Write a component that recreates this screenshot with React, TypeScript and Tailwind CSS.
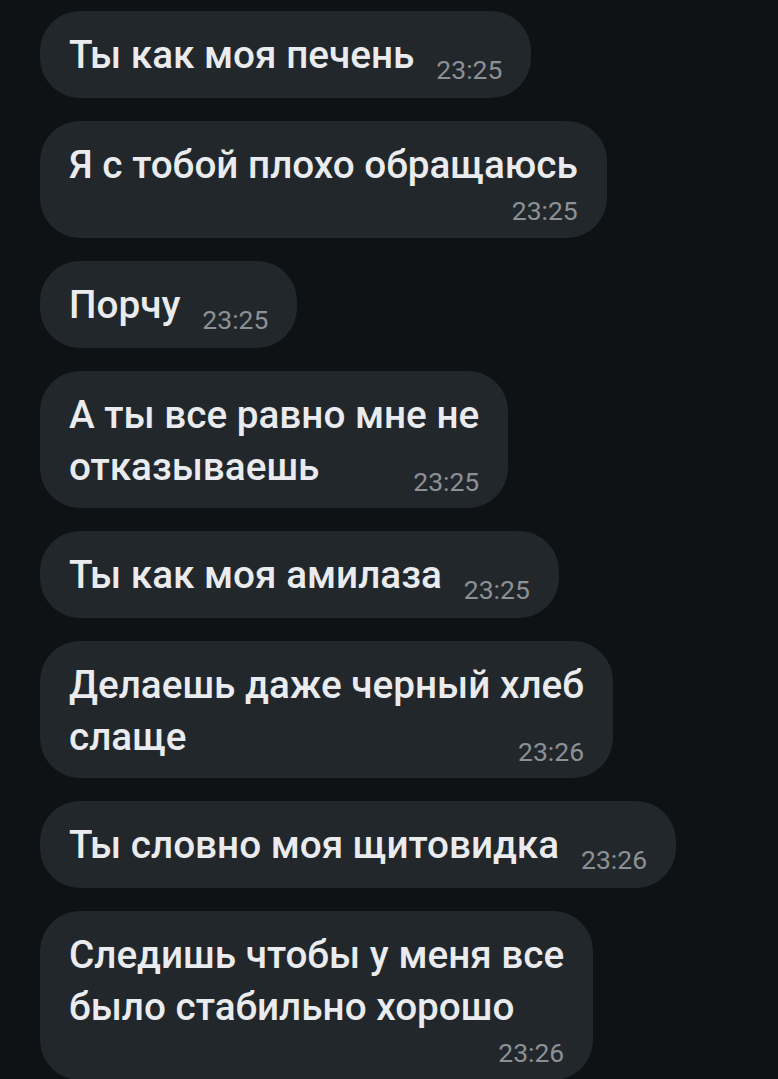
import React from "react";

type Message = {
  lines: string[];
  time: string;
  below?: boolean;
};

const messages: Message[] = [
  { lines: ["Ты как моя печень"], time: "23:25" },
  { lines: ["Я с тобой плохо обращаюсь"], time: "23:25", below: true },
  { lines: ["Порчу"], time: "23:25" },
  { lines: ["А ты все равно мне не", "отказываешь"], time: "23:25" },
  { lines: ["Ты как моя амилаза"], time: "23:25" },
  { lines: ["Делаешь даже черный хлеб", "слаще"], time: "23:26" },
  { lines: ["Ты словно моя щитовидка"], time: "23:26" },
  { lines: ["Следишь чтобы у меня все", "было стабильно хорошо"], time: "23:26", below: true },
];

function Bubble({ msg }: { msg: Message }) {
  const last = msg.lines.length - 1;

  if (msg.below) {
    return (
      <div className="self-start rounded-[40px] bg-[#22272b] pl-[29px] pr-[29px] pt-[18px] pb-[14px]">
        {msg.lines.map((line, i) => (
          <div key={i} className="whitespace-nowrap text-[38.7px] leading-[52px] font-medium text-[#e9ebee]">
            {line}
          </div>
        ))}
        <div className="mt-[7px] text-right text-[26.5px] leading-[26px] text-[#8d9196]">
          {msg.time}
        </div>
      </div>
    );
  }

  return (
    <div
      className={
        msg.lines.length > 1
          ? "self-start rounded-[40px] bg-[#22272b] pl-[29px] pr-[29px] pt-[18px] pb-[15px]"
          : "self-start rounded-[40px] bg-[#22272b] pl-[29px] pr-[29px] pt-[18px] pb-[17px]"
      }
    >
      {msg.lines.map((line, i) =>
        i < last ? (
          <div key={i} className="whitespace-nowrap text-[38.7px] leading-[52px] font-medium text-[#e9ebee]">
            {line}
          </div>
        ) : (
          <div key={i} className="flex items-baseline justify-between gap-[22px]">
            <span className="whitespace-nowrap text-[38.7px] leading-[52px] font-medium text-[#e9ebee]">
              {line}
            </span>
            <span className="translate-y-[11px] text-[26.5px] leading-[26px] text-[#8d9196]">
              {msg.time}
            </span>
          </div>
        )
      )}
    </div>
  );
}

export default function App() {
  return (
    <div className="min-h-screen bg-[#0f1215] font-['Roboto',sans-serif]">
      <main className="flex flex-col gap-[23px] pl-10 pt-[11px] pb-6">
        {messages.map((m, i) => (
          <Bubble key={i} msg={m} />
        ))}
      </main>
    </div>
  );
}
